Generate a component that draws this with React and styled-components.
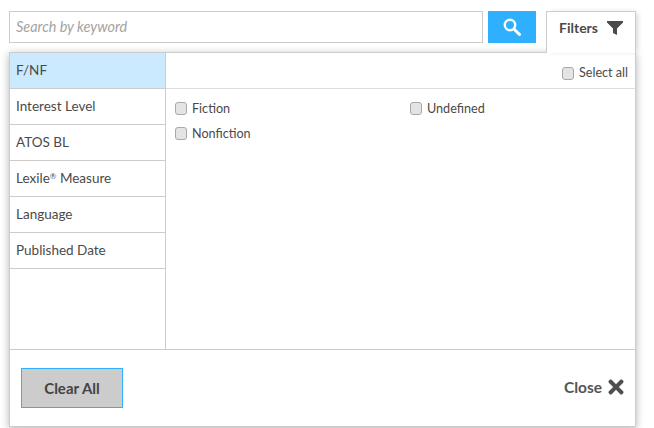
import React from "react";
import styled, { createGlobalStyle } from "styled-components";
import { FaTimes } from "react-icons/fa";

const Global = createGlobalStyle`
  html, body {
    margin: 0;
    background: #fff;
  }
  body {
    width: 654px;
    height: 428px;
    overflow: hidden;
    font-family: "Lato", "Noto Sans", sans-serif;
    color: #4a4a4a;
  }
  * { box-sizing: border-box; }
`;

const Page = styled.div`
  position: relative;
  padding: 11px 18px 0 9px;
  height: 428px;
  overflow: hidden;
`;

const TopBar = styled.div`
  display: flex;
  align-items: flex-start;
  height: 41px;
`;

const SearchInput = styled.input`
  width: 474px;
  height: 32px;
  border: 1px solid #ccc;
  padding: 0 6px 1px;
  font: italic 14.4px "Lato", sans-serif;
  outline: none;
  &::placeholder { color: #a3a3a3; opacity: 1; }
`;

const SearchButton = styled.button`
  width: 48px;
  height: 32px;
  margin-left: 5px;
  border: 0;
  padding: 0;
  background: #2fb0ff;
  color: #fff;
  display: flex;
  align-items: center;
  justify-content: center;
`;

const FilterTab = styled.div`
  position: relative;
  z-index: 2;
  width: 90px;
  height: 42px;
  margin-left: 10px;
  border: 1px solid #ccc;
  border-bottom: 0;
  background: #fff;
  display: flex;
  align-items: flex-start;
  justify-content: center;
  gap: 9px;
  padding-top: 7px;
  font-size: 14px;
  font-weight: 700;
  line-height: 18px;
  box-shadow: 3px 0 6px -2px rgba(0, 0, 0, 0.2);
`;

const Panel = styled.div`
  position: relative;
  z-index: 1;
  width: 627px;
  height: 375px;
  border: 1px solid #ccc;
  background: #fff;
  display: flex;
  flex-direction: column;
  box-shadow: 0 2px 8px rgba(0, 0, 0, 0.3);
`;

const Body = styled.div`
  flex: 1;
  display: flex;
  min-height: 0;
`;

const Sidebar = styled.div`
  width: 156px;
  border-right: 1px solid #ccc;
`;

const SideItem = styled.div`
  height: 36px;
  border-bottom: 1px solid #ccc;
  padding: 0 0 2px 6px;
  display: flex;
  align-items: center;
  font-size: 13.5px;
  background: ${(p) => (p.$active ? "#cceaff" : "#fff")};
  sup { font-size: 8px; line-height: 0; margin-top: -4px; align-self: center; }
`;

const Content = styled.div`
  flex: 1;
`;

const ContentHead = styled.div`
  height: 36px;
  border-bottom: 1px solid #ddd;
  display: flex;
  align-items: flex-end;
  justify-content: flex-end;
  padding: 0 7px 7px 0;
`;

const Check = styled.label`
  display: flex;
  align-items: center;
  gap: 5px;
  font-size: 12.6px;
  line-height: 16px;
`;

const Box = styled.span`
  width: 12px;
  height: 13px;
  border: 1px solid #a9a9a9;
  border-radius: 3px;
  background: #e4e4e4;
  flex: none;
`;

const Options = styled.div`
  display: grid;
  grid-template-columns: 235px 1fr;
  grid-auto-rows: 25px;
  padding: 7px 0 0 9px;
`;

const Footer = styled.div`
  height: 77px;
  flex: none;
  border-top: 1px solid #ccc;
  display: flex;
  align-items: flex-start;
  justify-content: space-between;
  padding: 18px 8px 0 11px;
`;

const ClearButton = styled.button`
  width: 102px;
  height: 40px;
  border: 1px solid #2fb0ff;
  background: #ccc;
  color: #444;
  font: 700 15px "Lato", sans-serif;
`;

const CloseLink = styled.div`
  display: flex;
  align-items: center;
  gap: 3px;
  height: 38px;
  font-size: 15.5px;
  font-weight: 700;
  color: #555;
  svg { font-size: 22px; color: #4f4f4f; }
`;

// the results list underneath the panel, only the tops of its letters show
const BehindText = styled.div`
  position: absolute;
  left: 447px;
  top: 425px;
  font-size: 13px;
  line-height: 16px;
  color: #555;
  white-space: nowrap;
`;

const items = ["F/NF", "Interest Level", "ATOS BL", null, "Language", "Published Date"];

const SearchIcon = () => (
  <svg width="18" height="18" viewBox="0 0 18 18" fill="none" stroke="#fff">
    <circle cx="7" cy="7" r="5.2" strokeWidth="2.4" />
    <path d="M11 11l5.5 5.5" strokeWidth="3" strokeLinecap="round" />
  </svg>
);

const FunnelIcon = () => (
  <svg width="16" height="14" viewBox="0 0 16 14" style={{ marginTop: 2 }}>
    <path d="M0 0h16v1.5L10 7.5V14L6 12V7.5L0 1.5z" fill="#4a4a4a" />
  </svg>
);

export default function App() {
  return (
    <Page>
      <Global />
      <BehindText>Published: 11/11/2011</BehindText>
      <TopBar>
        <SearchInput placeholder="Search by keyword" />
        <SearchButton><SearchIcon /></SearchButton>
        <FilterTab>Filters <FunnelIcon /></FilterTab>
      </TopBar>
      <Panel>
        <Body>
          <Sidebar>
            {items.map((item, i) => (
              <SideItem key={i} $active={i === 0}>
                {item || <>Lexile<sup>®</sup>&nbsp;Measure</>}
              </SideItem>
            ))}
          </Sidebar>
          <Content>
            <ContentHead>
              <Check><Box />Select all</Check>
            </ContentHead>
            <Options>
              <Check><Box />Fiction</Check>
              <Check><Box />Undefined</Check>
              <Check><Box />Nonfiction</Check>
            </Options>
          </Content>
        </Body>
        <Footer>
          <ClearButton>Clear All</ClearButton>
          <CloseLink>Close <FaTimes /></CloseLink>
        </Footer>
      </Panel>
    </Page>
  );
}
